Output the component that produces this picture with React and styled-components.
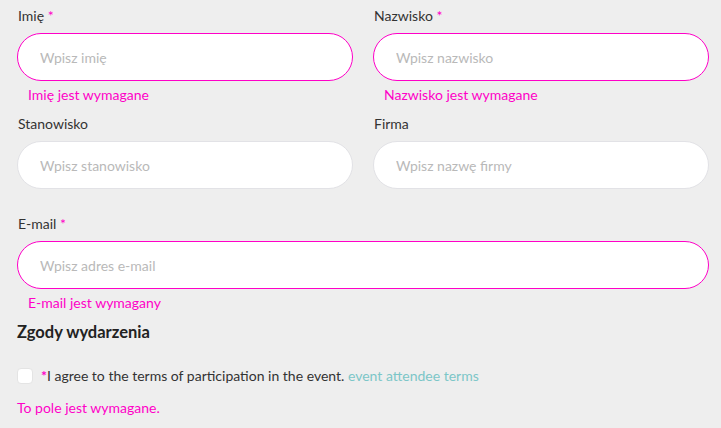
import React from "react";
import styled, { createGlobalStyle } from "styled-components";

const Global = createGlobalStyle`
  html, body { margin: 0; padding: 0; background: #eeeeee; }
  body { font-family: "Lato", "Noto Sans", sans-serif; color: #333; }
  * { box-sizing: border-box; }
`;

const MAGENTA = "#ff00c8";

const Page = styled.div`
  padding: 0 12px 0 17px;
  width: 721px;
`;

const Row = styled.div`
  display: grid;
  grid-template-columns: ${(p) => (p.$cols === 1 ? "1fr" : "1fr 1fr")};
  column-gap: 20px;
`;

const Field = styled.div`
  display: flex;
  flex-direction: column;
  height: ${(p) => (p.$h ? `${p.$h}px` : "auto")};
`;

const Label = styled.label`
  font-size: 14px;
  line-height: 17px;
  color: #333;
  padding-left: 1px;
  margin-top: ${(p) => p.$mt ?? 6}px;
  margin-bottom: 9px;
`;

const Star = styled.span`
  color: ${MAGENTA};
  font-weight: ${(p) => (p.$bold ? 700 : 400)};
`;

const Input = styled.input`
  height: 48px;
  border-radius: 24px;
  border: 1px solid ${(p) => (p.$error ? MAGENTA : "#e2e2e6")};
  background: #fff;
  padding: 0 22px;
  font-family: inherit;
  font-size: 14px;
  color: #333;
  outline: none;
  width: 100%;
  &::placeholder { color: #b9b9b9; }
`;

const Error = styled.div`
  color: ${MAGENTA};
  font-size: 14px;
  line-height: 16px;
  margin-top: 6px;
  padding-left: 11px;
`;

const Heading = styled.h2`
  margin: 0;
  font-size: 16.5px;
  font-weight: 700;
  color: #222;
  line-height: 20px;
  margin-top: 11px;
`;

const ConsentRow = styled.label`
  display: flex;
  align-items: center;
  gap: 8px;
  margin-top: 25px;
  font-size: 14px;
  color: #333;
`;

const Box = styled.span`
  width: 16px;
  height: 16px;
  border-radius: 4px;
  background: #fff;
  border: 1px solid #e4e4e4;
  flex: none;
`;

const Link = styled.a`
  color: #7cc6c8;
  text-decoration: none;
`;

const FinalError = styled(Error)`
  margin-top: 16px;
  padding-left: 0;
`;

export default function App() {
  return (
    <Page>
      <Global />
      <Row>
        <Field $h={109}>
          <Label $mt={7}>Imię <Star>*</Star></Label>
          <Input $error placeholder="Wpisz imię" />
          <Error>Imię jest wymagane</Error>
        </Field>
        <Field $h={109}>
          <Label $mt={7}>Nazwisko <Star>*</Star></Label>
          <Input $error placeholder="Wpisz nazwisko" />
          <Error>Nazwisko jest wymagane</Error>
        </Field>
      </Row>
      <Row>
        <Field $h={100}>
          <Label>Stanowisko</Label>
          <Input placeholder="Wpisz stanowisko" />
        </Field>
        <Field $h={100}>
          <Label>Firma</Label>
          <Input placeholder="Wpisz nazwę firmy" />
        </Field>
      </Row>
      <Row $cols={1}>
        <Field>
          <Label>E-mail <Star>*</Star></Label>
          <Input $error placeholder="Wpisz adres e-mail" />
          <Error>E-mail jest wymagany</Error>
        </Field>
      </Row>
      <Heading>Zgody wydarzenia</Heading>
      <ConsentRow>
        <Box />
        <span>
          <Star $bold>*</Star>I agree to the terms of participation in the event.{" "}
          <Link href="#">event attendee terms</Link>
        </span>
      </ConsentRow>
      <FinalError>To pole jest wymagane.</FinalError>
    </Page>
  );
}
